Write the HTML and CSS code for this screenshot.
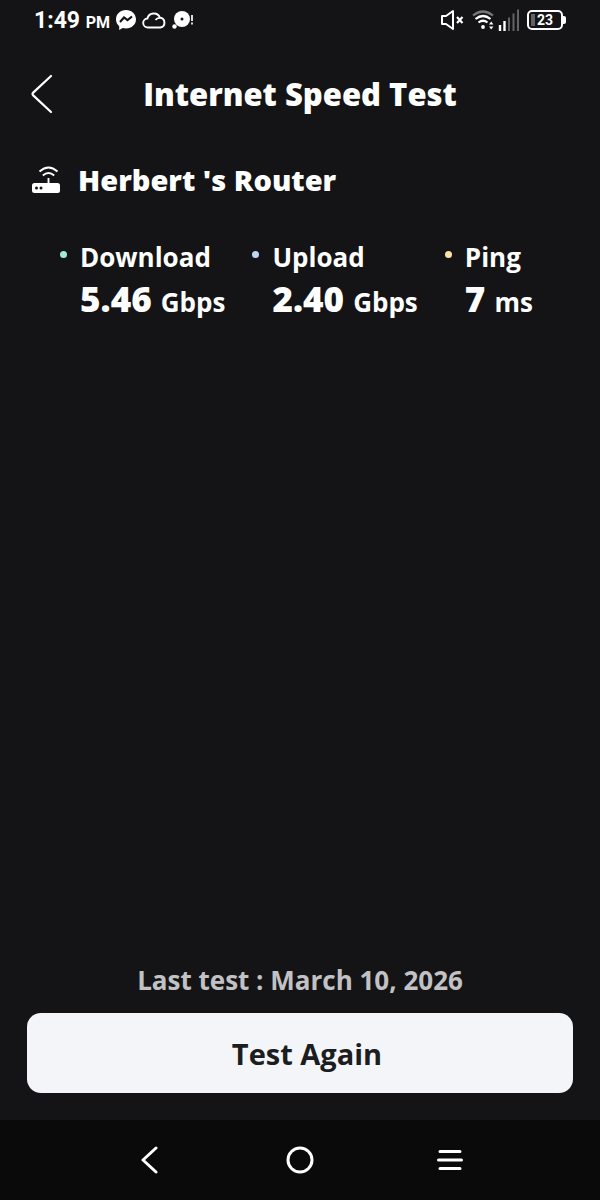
FILE: index.html
```html
<!DOCTYPE html>
<html lang="en">
<head>
<meta charset="utf-8">
<meta name="viewport" content="width=device-width, initial-scale=1">
<title>Internet Speed Test</title>
<link rel="stylesheet" href="styles.css">
</head>
<body>
<div class="screen">
  <div class="status">
    <div class="status-left">
      <span class="clock">1:49 <span class="meridiem">PM</span></span>
      <svg class="icon" width="20" height="22" viewBox="0 0 20 22" aria-hidden="true">
        <path d="M10 1C4.400 1 0 5 0 10.300c0 2.900 1.200 5.300 3.200 6.900V21l3.500-1.900c1 .3 2.100.4 3.300.4 5.600 0 10-4 10-9.200S15.600 1 10 1z" fill="#fff"/>
        <path d="M4 13l4-4.500 3.500 2.700 4.500-3.700" fill="none" stroke="#141416" stroke-width="2.200"/>
      </svg>
      <svg class="icon" width="24" height="18" viewBox="0 0 24 18" aria-hidden="true">
        <path d="M6 16.500a4.500 4.500 0 0 1-.6-9A6.600 6.600 0 0 1 18 6.800a4.900 4.900 0 0 1 .4 9.700z" fill="none" stroke="#fff" stroke-width="1.900"/>
        <path d="M13.500 9q1.500-2.400 4.500-2.200" fill="none" stroke="#fff" stroke-width="1.700"/>
      </svg>
      <svg class="icon" width="22" height="20" viewBox="0 0 22 20" aria-hidden="true">
        <circle cx="10" cy="9" r="8" fill="#fff"/>
        <circle cx="10" cy="9" r="1.500" fill="#141416"/>
        <circle cx="2.500" cy="16.500" r="2.200" fill="#fff"/>
        <path d="M20 5v6M20 12.500v2" stroke="#fff" stroke-width="1.700"/>
      </svg>
    </div>
    <div class="status-right">
      <svg class="icon" width="24" height="22" viewBox="0 0 24 22" aria-hidden="true">
        <path d="M1 7h4l7-5v18l-7-5H1z" fill="none" stroke="#fff" stroke-width="2" stroke-linejoin="round"/>
        <path d="M16 8l5.500 6M21.500 8L16 14" stroke="#fff" stroke-width="2.200"/>
      </svg>
      <svg class="icon signal" width="48" height="24" viewBox="0 0 48 24" aria-hidden="true">
        <g fill="none" stroke="#fff" stroke-width="2.200">
          <path d="M1 7.500q10-8 20 0" stroke="#77777a"/>
          <path d="M3.500 11q7.500-6 15 0"/>
          <path d="M6.500 14.500q4.500-3.500 9 0"/>
        </g>
        <circle cx="11" cy="19" r="1.900" fill="#fff"/>
        <path d="M17 16.500l2.200-3 2.200 3zM17 18.500l2.200 3 2.200-3z" fill="#fff"/>
        <path d="M28 17V23M32.500 13V23" stroke="#fff" stroke-width="2.400"/>
        <path d="M37 9.500V23M41.500 5.500V23M46 1.500V23" stroke="#626265" stroke-width="2"/>
      </svg>
      <span class="battery"><span class="charge"></span>23</span>
    </div>
  </div>

  <header class="header">
    <button class="back" type="button" aria-label="Back">
      <svg class="icon" width="22" height="40" viewBox="0 0 22 40" aria-hidden="true">
        <path d="M20 2L2.200 18.600q-1.400 1.400 0 2.800L20 38" fill="none" stroke="#fff" stroke-width="2.200" stroke-linecap="round"/>
      </svg>
    </button>
    <h1 class="title">Internet Speed Test</h1>
  </header>

  <main class="main">
    <div class="device">
      <svg class="icon" width="30" height="28" viewBox="0 0 30 28" aria-hidden="true">
        <path d="M8.500 5.500q9-8 18 0M11.800 9.500q5.700-5 11.400 0" fill="none" stroke="#fff" stroke-width="1.900"/>
        <path d="M17.500 12v7" stroke="#fff" stroke-width="1.900"/>
        <rect x="1" y="17" width="28" height="10" rx="2.500" fill="#fff"/>
        <circle cx="5.500" cy="22" r="1.500" fill="#141416"/>
        <circle cx="10" cy="22" r="1.500" fill="#141416"/>
      </svg>
      <h2 class="device-name">Herbert 's Router</h2>
    </div>

    <dl class="metrics">
      <div class="metric metric-download">
        <dt class="label">Download</dt>
        <dd class="value">5.46 <span class="unit">Gbps</span></dd>
      </div>
      <div class="metric metric-upload">
        <dt class="label">Upload</dt>
        <dd class="value">2.40 <span class="unit">Gbps</span></dd>
      </div>
      <div class="metric metric-ping">
        <dt class="label">Ping</dt>
        <dd class="value">7 <span class="unit">ms</span></dd>
      </div>
    </dl>
  </main>

  <div class="actions">
    <p class="last-test">Last test : March 10, 2026</p>
    <button class="again" type="button">Test Again</button>
  </div>

  <nav class="system-nav" aria-label="System">
    <button class="nav-button" type="button" aria-label="Back">
      <svg class="icon" width="28" height="28" viewBox="0 0 28 28" aria-hidden="true">
        <path d="M20 2L7 14l13 12" fill="none" stroke="#fff" stroke-width="3" stroke-linecap="round" stroke-linejoin="round"/>
      </svg>
    </button>
    <button class="nav-button" type="button" aria-label="Home">
      <svg class="icon" width="28" height="28" viewBox="0 0 28 28" aria-hidden="true">
        <circle cx="14" cy="14" r="12" fill="none" stroke="#fff" stroke-width="3"/>
      </svg>
    </button>
    <button class="nav-button" type="button" aria-label="Menu">
      <svg class="icon" width="28" height="28" viewBox="0 0 28 28" aria-hidden="true">
        <path d="M4 5.500h20M2.500 14h23M4 22.500h20" stroke="#fff" stroke-width="3" stroke-linecap="round"/>
      </svg>
    </button>
  </nav>
</div>
</body>
</html>
```
FILE: styles.css
```css
* {
  box-sizing: border-box;
}

body {
  margin: 0;
  background: #141416;
  color: #fff;
  font-family: "Open Sans", sans-serif;
}

h1, h2, p, dl, dd {
  margin: 0;
}

button {
  border: 0;
  padding: 0;
  background: none;
  color: inherit;
  font: inherit;
}

.screen {
  display: flex;
  flex-direction: column;
  min-height: 100vh;
}

.icon {
  display: block;
  flex: none;
}

.status {
  display: flex;
  justify-content: space-between;
  align-items: center;
  height: 40px;
  padding: 0 34px;
  font-family: Roboto, sans-serif;
}

.status-left,
.status-right {
  display: flex;
  align-items: center;
  gap: 6px;
}

.status-right {
  gap: 7px;
}

.clock {
  padding-top: 4px;
  font-size: 23px;
  font-weight: 700;
  line-height: 28px;
}

.meridiem {
  font-size: 16px;
}

.battery {
  position: relative;
  display: flex;
  align-items: center;
  justify-content: center;
  width: 36px;
  height: 20px;
  margin-right: 3px;
  border: 2px solid #fff;
  border-radius: 5px;
  font-size: 14px;
  font-weight: 700;
}

.battery::after {
  content: "";
  position: absolute;
  top: 4px;
  right: -5px;
  width: 3px;
  height: 8px;
  border-radius: 0 2px 2px 0;
  background: #fff;
}

.charge {
  position: absolute;
  top: 2px;
  bottom: 2px;
  left: 2px;
  width: 4px;
  background: #626265;
}

.header {
  display: grid;
  grid-template-columns: 60px 1fr 60px;
  align-items: center;
  height: 108px;
}

.back {
  justify-self: end;
  padding: 0 7px 0 30px;
}

.title {
  font-size: 31px;
  font-weight: 800;
  line-height: 40px;
  text-align: center;
}

.main {
  flex: 1;
}

.device {
  display: flex;
  align-items: center;
  gap: 17px;
  padding: 12px 31px;
}

.device-name {
  font-size: 29px;
  font-weight: 800;
  line-height: 40px;
}

.metrics {
  display: flex;
  gap: 27px;
  padding: 25px 60px;
}

.metric {
  position: relative;
  padding-left: 20px;
  white-space: nowrap;
}

.metric::before {
  content: "";
  position: absolute;
  top: 14px;
  left: 0;
  width: 7px;
  height: 7px;
  border-radius: 50%;
}

.metric-download::before {
  background: #a5e9cf;
}

.metric-upload::before {
  background: #bfd5f8;
}

.metric-ping::before {
  background: #fbe2a8;
}

.label {
  font-size: 26px;
  font-weight: 700;
  line-height: 40px;
}

.value {
  font-size: 35px;
  font-weight: 800;
  line-height: 44px;
}

.unit {
  font-size: 26px;
  font-weight: 700;
}

.actions {
  padding: 0 27px 27px;
  text-align: center;
}

.last-test {
  padding-bottom: 13px;
  color: #c2c2c4;
  font-size: 26px;
  font-weight: 700;
  line-height: 40px;
}

.again {
  width: 100%;
  height: 80px;
  padding-left: 14px;
  border-radius: 14px;
  background: #f4f5f8;
  color: #1c1d20;
  font-size: 29px;
  font-weight: 700;
}

.system-nav {
  display: flex;
  justify-content: center;
  gap: 122px;
  height: 80px;
  background: #0a0a0a;
}
```
